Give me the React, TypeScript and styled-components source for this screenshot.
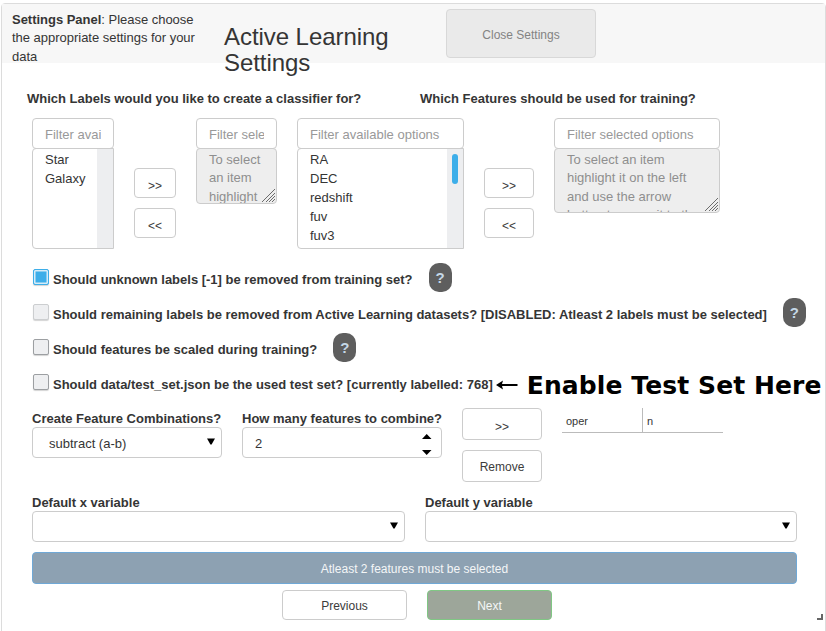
import React from 'react';
import styled, { createGlobalStyle } from 'styled-components';

const Global = createGlobalStyle`
  * { box-sizing: border-box; }
  body {
    margin: 0;
    background: #fff;
    color: #353535;
    font: 13px/18.57px "Liberation Sans", Arial, sans-serif;
    overflow: hidden;
  }
  p, h1 { margin: 0; font-weight: normal; }
`;

const Panel = styled.main`
  position: relative;
  width: 825px;
  height: 640px;
  margin: 3px 0 0 1px;
  border: 1px solid #dcdcdc;
  border-radius: 4px;
`;

const Header = styled.header`
  display: flex;
  align-items: flex-start;
  height: 59px;
  padding-left: 10px;
  background: #f7f7f7;
`;

const Intro = styled.p`
  width: 212px;
  padding-top: 6.5px;
  white-space: nowrap;
  letter-spacing: -0.02px;
`;

const Title = styled.h1`
  width: 222px;
  padding-top: 20px;
  font-size: 24px;
  line-height: 26px;
  letter-spacing: -0.06px;
`;

type Tone = 'plain' | 'muted' | 'blue' | 'green';

const tones: Record<Tone, { edge: string; fill: string; text: string }> = {
  plain: { edge: '#ccc', fill: '#fff', text: '#3b3b3b' },
  muted: { edge: '#d8d8d8', fill: '#eaeaea', text: '#838383' },
  blue: { edge: '#6fa8d6', fill: '#8da1b2', text: '#f4f6f7' },
  green: { edge: '#80c784', fill: '#9da69a', text: '#f4f6f7' },
};

const Button = styled.button<{ $w: number; $h: number; $tone?: Tone }>`
  display: flex;
  align-items: center;
  justify-content: center;
  width: ${p => p.$w}px;
  height: ${p => p.$h}px;
  padding: 2px 0 0;
  border: 1px solid ${p => tones[p.$tone ?? 'plain'].edge};
  border-radius: 4px;
  background: ${p => tones[p.$tone ?? 'plain'].fill};
  color: ${p => tones[p.$tone ?? 'plain'].text};
  font: 12px/18px "Liberation Sans", Arial, sans-serif;
`;

const CloseButton = styled(Button)`
  margin-top: 5px;
`;

const MoveButton = styled(Button)`
  padding-top: 5px;
`;

const Questions = styled.div`
  display: grid;
  grid-template-columns: 393px auto;
  height: 45px;
  padding: 27px 0 0 25px;
`;

const Label = styled.label`
  display: block;
  font-weight: bold;
  white-space: nowrap;
  letter-spacing: -0.003px;
`;

const Selectors = styled.div`
  display: flex;
  height: 131px;
  margin: 10px 0 0 30px;
`;

const ListColumn = styled.div<{ $w: number; $gap: number }>`
  width: ${p => p.$w}px;
  margin-right: ${p => p.$gap}px;
`;

const Filter = styled.div`
  height: 31px;
  padding: 7px 12px 0;
  border: 1px solid #ccc;
  border-radius: 4px;
  color: #999;
  white-space: nowrap;
`;

const FilterText = styled.span`
  display: block;
  overflow: hidden;
`;

const OptionList = styled.div`
  display: flex;
  justify-content: space-between;
  height: 101px;
  margin-top: -1px;
  border: 1px solid #ccc;
  border-radius: 4px 0 0 4px;
`;

const Options = styled.div`
  padding: 1px 0 0 12px;
  line-height: 19px;
`;

const Track = styled.div`
  width: 16px;
  padding: 5px 0 0 5px;
  background: #edeef0;
`;

const Thumb = styled.div`
  width: 6px;
  height: 30px;
  border-radius: 3px;
  background: #3daee9;
`;

const Help = styled.div<{ $h: number }>`
  position: relative;
  height: ${p => p.$h}px;
  margin-top: -1px;
  padding: 1.6px 12px 0;
  border: 1px solid #ccc;
  border-radius: 4px;
  background: #eee;
  color: #8f8f8f;
  overflow: hidden;
  white-space: nowrap;
`;

const GripSvg = styled.svg`
  position: absolute;
  right: 1px;
  bottom: 1px;
`;

const Arrows = styled.div`
  display: flex;
  flex-direction: column;
  gap: 10px;
  padding-top: 50px;
  margin-right: 20px;
`;

const Checks = styled.div`
  display: grid;
  grid-auto-rows: 35px;
  padding: 12px 0 0 31px;
`;

const CheckRow = styled.div`
  display: flex;
  align-items: center;
  height: 35px;

  ${Label} { padding-top: 4px; }
`;

const Box = styled.span<{ $state?: 'on' | 'off' }>`
  width: 16px;
  height: 16px;
  margin: 0 4px 4px 0;
  flex: none;
  border: 1px solid ${p => (p.$state === 'on' ? '#3daee9' : p.$state === 'off' ? '#ccced0' : '#9c9fa2')};
  border-radius: 2px;
  background: ${p => (p.$state === 'on' ? '#3daee9' : '#eeeff1')};
  box-shadow: ${p => (p.$state === 'on' ? 'inset 0 0 0 1.5px #d6ecf8, ' : '')}0 1px 1px #d4d4d4;
`;

const HelpBadge = styled.span`
  display: flex;
  align-items: center;
  justify-content: center;
  width: 23px;
  height: 29px;
  margin: 0 0 2px 16px;
  padding-top: 1px;
  border-radius: 10px;
  background: #5e5e5e;
  color: #c5d8e7;
  font: bold 15px/20px "Liberation Sans", Arial, sans-serif;
`;

const ArrowIcon = styled.svg`
  margin: 2px 0 0 1px;
`;

const Callout = styled.strong`
  margin: 4px 0 0 9px;
  color: #000;
  font: bold 25px/28px "DejaVu Sans", sans-serif;
  letter-spacing: 0.1px;
  white-space: nowrap;
`;

const Combine = styled.div`
  display: flex;
  height: 75px;
  margin: 7px 0 0 30px;
`;

const Field = styled.div<{ $w: number }>`
  width: ${p => p.$w}px;
  margin-right: 20px;

  ${Label} {
    padding-top: 2px;
    margin-bottom: -2px;
  }
`;

const Control = styled.div<{ $pad: number }>`
  display: flex;
  align-items: center;
  justify-content: space-between;
  height: 31px;
  padding: 4px 6px 0 ${p => p.$pad}px;
  border: 1px solid #ccc;
  border-radius: 4px;
`;

const CaretSvg = styled.svg`
  margin-bottom: 5px;
`;

const SpinnerSvg = styled.svg`
  margin-bottom: 1px;
`;

const Stack = styled.div`
  display: flex;
  flex-direction: column;
  gap: 10px;
  margin-right: 20px;
`;

const Table = styled.div`
  display: grid;
  grid-template-columns: 81px 80px;
  height: 25px;
  border-bottom: 1px solid #bbb;
  font-size: 11px;
  line-height: 26px;
`;

const Cell = styled.span`
  height: 24px;
  padding-left: 4px;
  &:first-child { border-right: 1px solid #bbb; }
`;

const Defaults = styled.div`
  display: flex;
  margin: 9px 0 10px 30px;
`;

const Actions = styled.div`
  padding-left: 30px;
`;

const Nav = styled.div`
  display: flex;
  gap: 20px;
  padding: 6px 0 0 280px;
`;

const Corner = styled.svg`
  position: absolute;
  right: 2px;
  top: 610px;
`;

const Grip = () => (
  <GripSvg width="13" height="13" viewBox="0 0 13 13" stroke="#6c6c6c" strokeWidth="1">
    <path d="M0 13L13 0M4 13L13 4M7 13L13 7M10 13L13 10" />
  </GripSvg>
);

const Caret = () => (
  <CaretSvg width="8" height="7" viewBox="0 0 8 7"><path d="M0 0.5H8L4.6 6.5H3.4Z" /></CaretSvg>
);

const Spinner = () => (
  <SpinnerSvg width="17" height="26" viewBox="0 0 17 26">
    <path d="M4 8L8.7 3L13.5 8ZM4 19L8.7 24L13.5 19Z" />
  </SpinnerSvg>
);

export default function App() {
  return (
    <>
      <Global />
      <Panel>
        <Header>
          <Intro><b>Settings Panel</b>: Please choose<br />the appropriate settings for your<br />data</Intro>
          <Title>Active Learning Settings</Title>
          <CloseButton $w={150} $h={49} $tone="muted">Close Settings</CloseButton>
        </Header>
        <Questions>
          <Label>Which Labels would you like to create a classifier for?</Label>
          <Label>Which Features should be used for training?</Label>
        </Questions>
        <Selectors>
          <ListColumn $w={82} $gap={20}>
            <Filter><FilterText>Filter available options</FilterText></Filter>
            <OptionList>
              <Options>Star<br />Galaxy</Options>
              <Track />
            </OptionList>
          </ListColumn>
          <Arrows>
            <MoveButton $w={42} $h={30}>&gt;&gt;</MoveButton>
            <MoveButton $w={42} $h={30}>&lt;&lt;</MoveButton>
          </Arrows>
          <ListColumn $w={81} $gap={20}>
            <Filter><FilterText>Filter selected options</FilterText></Filter>
            <Help $h={56}>To select<br />an item<br />highlight<Grip /></Help>
          </ListColumn>
          <ListColumn $w={167} $gap={20}>
            <Filter><FilterText>Filter available options</FilterText></Filter>
            <OptionList>
              <Options>RA<br />DEC<br />redshift<br />fuv<br />fuv3</Options>
              <Track><Thumb /></Track>
            </OptionList>
          </ListColumn>
          <Arrows>
            <MoveButton $w={50} $h={30}>&gt;&gt;</MoveButton>
            <MoveButton $w={50} $h={30}>&lt;&lt;</MoveButton>
          </Arrows>
          <ListColumn $w={166} $gap={0}>
            <Filter><FilterText>Filter selected options</FilterText></Filter>
            <Help $h={65}>To select an item<br />highlight it on the left<br />and use the arrow<br />button to move it to the<Grip /></Help>
          </ListColumn>
        </Selectors>
        <Checks>
          <CheckRow><Box $state="on" /><Label>Should unknown labels [-1] be removed from training set?</Label><HelpBadge>?</HelpBadge></CheckRow>
          <CheckRow><Box $state="off" /><Label>Should remaining labels be removed from Active Learning datasets? [DISABLED: Atleast 2 labels must be selected]</Label><HelpBadge>?</HelpBadge></CheckRow>
          <CheckRow><Box /><Label>Should features be scaled during training?</Label><HelpBadge>?</HelpBadge></CheckRow>
          <CheckRow>
            <Box />
            <Label>Should data/test_set.json be the used test set? [currently labelled: 768]</Label>
            <ArrowIcon width="24" height="10" viewBox="0 0 24 10"><path d="M2 5L9 0.5L8 4H23.5V6H8L9 9.5Z" /></ArrowIcon>
            <Callout>Enable Test Set Here</Callout>
          </CheckRow>
        </Checks>
        <Combine>
          <Field $w={190}>
            <Label>Create Feature Combinations?</Label>
            <Control $pad={16}>subtract (a-b)<Caret /></Control>
          </Field>
          <Field $w={200}>
            <Label>How many features to combine?</Label>
            <Control $pad={12}>2<Spinner /></Control>
          </Field>
          <Stack>
            <MoveButton $w={80} $h={32}>&gt;&gt;</MoveButton>
            <Button $w={80} $h={32}>Remove</Button>
          </Stack>
          <Table><Cell>oper</Cell><Cell>n</Cell></Table>
        </Combine>
        <Defaults>
          <Field $w={373}><Label>Default x variable</Label><Control $pad={12}><span /><Caret /></Control></Field>
          <Field $w={372}><Label>Default y variable</Label><Control $pad={12}><span /><Caret /></Control></Field>
        </Defaults>
        <Actions><Button $w={765} $h={32} $tone="blue">Atleast 2 features must be selected</Button></Actions>
        <Nav>
          <Button $w={125} $h={30}>Previous</Button>
          <Button $w={125} $h={30} $tone="green">Next</Button>
        </Nav>
        <Corner width="6" height="6" viewBox="0 0 6 6"><path d="M4 0H6V6H0V4H4Z" fill="#666" /></Corner>
      </Panel>
    </>
  );
}
